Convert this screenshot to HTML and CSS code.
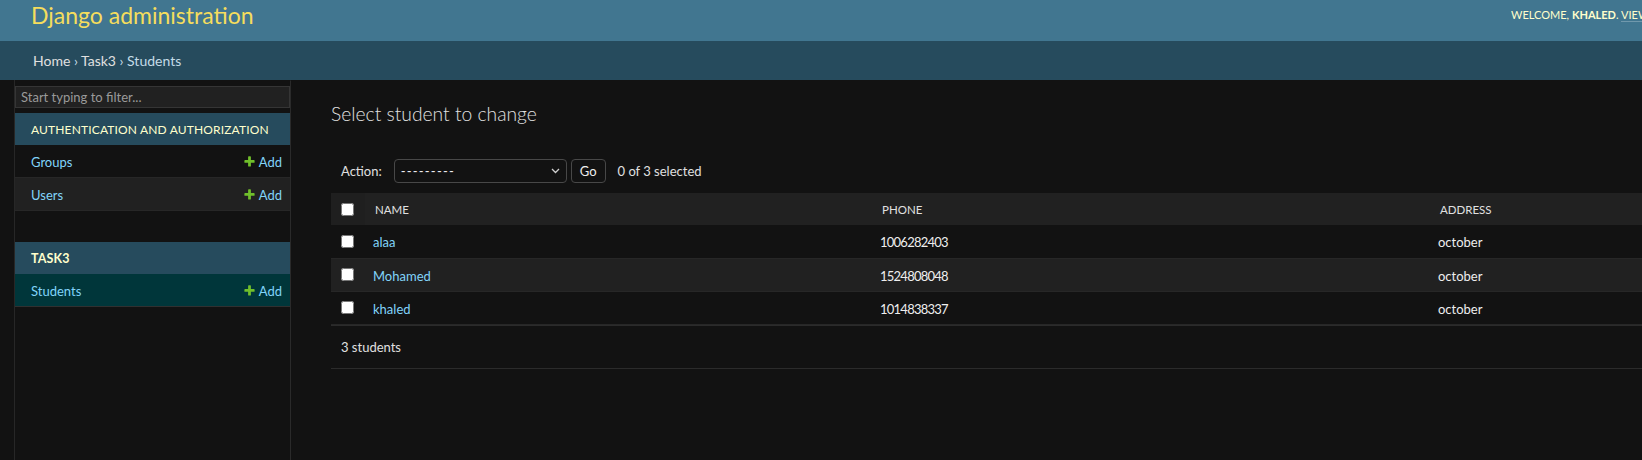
FILE: index.html
```html
<!DOCTYPE html>
<html lang="en">
<head>
<meta charset="utf-8">
<title>Select student to change | Django site admin</title>
<link rel="stylesheet" href="styles.css">
</head>
<body>
<header class="header">
  <div class="branding"><h1 class="site-name"><a href="#">Django administration</a></h1></div>
  <div class="user-tools">Welcome, <strong>khaled</strong>. <a href="#">View site</a> / <a href="#">Change password</a> / <a href="#">Log out</a></div>
</header>
<nav class="breadcrumbs"><a href="#">Home</a> › <a href="#">Task3</a> › Students</nav>
<div class="main">
  <button class="sidebar-toggle" aria-label="Toggle navigation"></button>
  <nav class="sidebar">
    <input class="nav-filter" type="search" placeholder="Start typing to filter...">
    <div class="module">
      <div class="caption"><a href="#">Authentication and Authorization</a></div>
      <div class="nav-row"><a href="#">Groups</a><a class="addlink" href="#"><svg class="plus" width="13" height="13" viewBox="0 0 1792 1792"><path fill="#70bf2b" d="M1600 796v192q0 40-28 68t-68 28h-416v416q0 40-28 68t-68 28h-192q-40 0-68-28t-28-68v-416h-416q-40 0-68-28t-28-68v-192q0-40 28-68t68-28h416v-416q0-40 28-68t68-28h192q40 0 68 28t28 68v416h416q40 0 68 28t28 68z"/></svg>Add</a></div>
      <div class="nav-row even"><a href="#">Users</a><a class="addlink" href="#"><svg class="plus" width="13" height="13" viewBox="0 0 1792 1792"><path fill="#70bf2b" d="M1600 796v192q0 40-28 68t-68 28h-416v416q0 40-28 68t-68 28h-192q-40 0-68-28t-28-68v-416h-416q-40 0-68-28t-28-68v-192q0-40 28-68t68-28h416v-416q0-40 28-68t68-28h192q40 0 68 28t28 68v416h416q40 0 68 28t28 68z"/></svg>Add</a></div>
    </div>
    <div class="module current-app">
      <div class="caption"><a href="#">Task3</a></div>
      <div class="nav-row current"><a href="#">Students</a><a class="addlink" href="#"><svg class="plus" width="13" height="13" viewBox="0 0 1792 1792"><path fill="#70bf2b" d="M1600 796v192q0 40-28 68t-68 28h-416v416q0 40-28 68t-68 28h-192q-40 0-68-28t-28-68v-416h-416q-40 0-68-28t-28-68v-192q0-40 28-68t68-28h416v-416q0-40 28-68t68-28h192q40 0 68 28t28 68v416h416q40 0 68 28t28 68z"/></svg>Add</a></div>
    </div>
  </nav>
  <main class="content">
    <h1 class="title">Select student to change</h1>
    <div class="actions">
      <label class="action-label">Action:</label>
      <div class="select"><span class="select-value">---------</span><svg class="chevron" width="9" height="6" viewBox="0 0 9 6"><path d="M1 1l3.5 3.5L8 1" fill="none" stroke="#d0d0d0" stroke-width="1.3"/></svg></div>
      <button class="go" type="button">Go</button>
      <span class="counter">0 of 3 selected</span>
    </div>
    <table class="result-list">
      <colgroup><col class="c-check"><col class="c-name"><col class="c-phone"><col></colgroup>
      <thead>
        <tr><th class="check"><input type="checkbox"></th><th>Name</th><th>Phone</th><th>Address</th></tr>
      </thead>
      <tbody>
        <tr><td class="check"><input type="checkbox"></td><td><a href="#">alaa</a></td><td class="num">1006282403</td><td>october</td></tr>
        <tr><td class="check"><input type="checkbox"></td><td><a href="#">Mohamed</a></td><td class="num">1524808048</td><td>october</td></tr>
        <tr><td class="check"><input type="checkbox"></td><td><a href="#">khaled</a></td><td class="num">1014838337</td><td>october</td></tr>
      </tbody>
    </table>
    <p class="paginator">3 students</p>
  </main>
</div>
</body>
</html>
```
FILE: styles.css
```css
* { box-sizing: border-box; }
html, body { margin: 0; padding: 0; }
body {
  background: #121212;
  color: #eeeeee;
  font-family: Lato, "Noto Sans", sans-serif;
  font-size: 13px;
  overflow: hidden;
}
a { color: #81d4fa; text-decoration: none; }

/* header */
.header {
  display: flex;
  align-items: flex-start;
  height: 41px;
  padding-left: 31px;
  background: #417690;
  overflow: hidden;
}
.branding { flex: 1; }
.site-name {
  margin: 0;
  padding-top: 1px;
  font-size: 23px;
  line-height: 29px;
  font-weight: 400;
}
.site-name a { color: #f5dd5d; }
.user-tools {
  flex: 0 0 131px;
  padding-top: 8px;
  font-size: 11px;
  line-height: 14px;
  letter-spacing: 0;
  text-transform: uppercase;
  color: #ffffcc;
  white-space: nowrap;
  overflow: hidden;
}
.user-tools strong { font-weight: 700; }
.user-tools a { color: #ffffcc; border-bottom: 1px solid rgba(255,255,255,0.25); }

/* breadcrumbs */
.breadcrumbs {
  height: 39px;
  padding: 10px 33px;
  background: #264b5d;
  color: #c4dce8;
  font-size: 14px;
  line-height: 19px;
}
.breadcrumbs a { color: #e0e0e0; }

/* main */
.main { display: flex; min-height: calc(100vh - 80px); }
.sidebar-toggle {
  flex: 0 0 15px;
  padding: 0;
  border: 0;
  border-right: 1px solid #272727;
  background: #121212;
}
.sidebar {
  flex: 0 0 276px;
  border-top: 1px solid transparent;
  border-right: 1px solid #2a2a2a;
}
.nav-filter {
  display: block;
  width: 100%;
  height: 22px;
  margin: 5px 0;
  padding: 2px 5px;
  border: 1px solid #353535;
  background: #212121;
  color: #eeeeee;
  font-family: inherit;
  font-size: 13px;
  outline: none;
}
.nav-filter::placeholder { color: #9a9a9a; }
.module { margin-bottom: 31px; }
.caption {
  display: flex;
  align-items: center;
  height: 32px;
  padding: 1px 16px 0;
  background: #264b5d;
  font-size: 12px;
  letter-spacing: 0.15px;
  text-transform: uppercase;
  white-space: nowrap;
}
.caption a { color: #ffffcc; }
.current-app .caption a { font-weight: 700; font-size: 12.5px; }
.nav-row {
  display: flex;
  align-items: center;
  justify-content: space-between;
  height: 33px;
  padding: 2px 8px 0 16px;
  border-bottom: 1px solid #272727;
  font-size: 13px;
}
.nav-row.even { background: #212121; }
.nav-row.current { background: #00363a; border-bottom-color: #303030; }
.addlink { display: inline-flex; align-items: center; gap: 3px; }
.plus { display: block; margin-top: -2px; }

/* content */
.content { flex: 1; min-width: 0; padding: 22px 0 0 40px; }
.title {
  margin: 0 0 23px;
  font-size: 19.3px;
  line-height: 24px;
  font-weight: 300;
  color: #e0e0e0;
}
.actions {
  display: flex;
  align-items: center;
  height: 44px;
  padding: 10px;
  color: #e0e0e0;
  font-size: 13px;
}
.select {
  display: flex;
  align-items: center;
  justify-content: space-between;
  width: 173px;
  height: 24px;
  margin-left: 12px;
  padding: 0 6px;
  border: 1px solid #484848;
  border-radius: 4px;
  background: #121212;
  color: #eeeeee;
}
.select-value { letter-spacing: 1.2px; }
.chevron { display: block; }
.go {
  height: 24px;
  margin-left: 4px;
  padding: 0 8px;
  border: 1px solid #484848;
  border-radius: 4px;
  background: #121212;
  color: #eeeeee;
  font-family: inherit;
  font-size: 13px;
}
.counter { margin-left: 12px; }

.result-list { width: 100%; border-collapse: collapse; table-layout: fixed; }
.c-check { width: 34px; }
.c-name { width: 507px; }
.c-phone { width: 558px; }
.result-list th {
  height: 32px;
  padding: 0 10px;
  background: #212121;
  text-align: left;
  font-size: 11.5px;
  font-weight: 400;
  text-transform: uppercase;
  color: #e0e0e0;
  white-space: nowrap;
}
.result-list td {
  height: 33px;
  padding: 2px 8px 0;
  border-bottom: 1px solid #272727;
  font-size: 13px;
  vertical-align: middle;
}
.result-list td.num { letter-spacing: -0.75px; }
.result-list tbody tr:nth-child(even) td { background: #212121; }
.result-list th.check, .result-list td.check { padding: 0 0 0 10px; }
.result-list th.check { background: #1f1f1f; }
.check input { display: block; width: 13px; height: 13px; margin: 0; }

.paginator {
  margin: 0;
  padding: 10px 10px 10px;
  line-height: 22px;
  font-size: 13px;
  color: #e0e0e0;
  border-top: 1px solid #2b2b2b;
  border-bottom: 1px solid #2b2b2b;
}
```
